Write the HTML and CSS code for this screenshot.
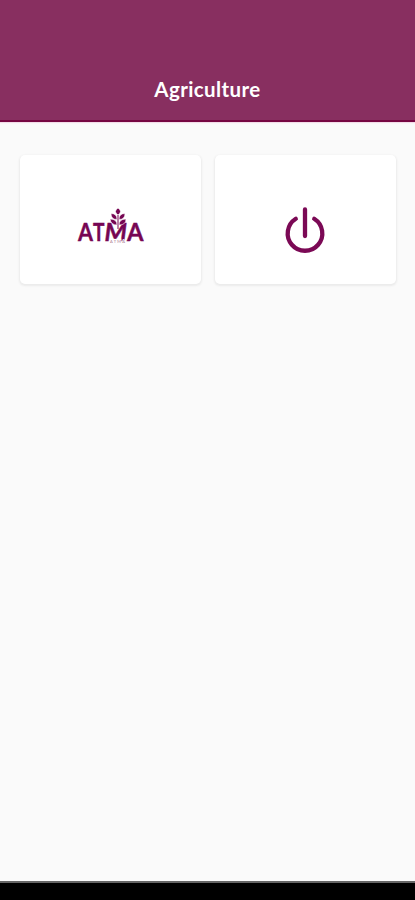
FILE: index.html
```html
<!DOCTYPE html>
<html lang="en">
<head>
<meta charset="utf-8">
<meta name="viewport" content="width=device-width, initial-scale=1">
<title>Agriculture</title>
<link rel="stylesheet" href="styles.css">
</head>
<body>
<header class="app-bar"><h1 class="title">Agriculture</h1></header>
<main class="tiles">
  <a class="tile">
    <svg class="logo" width="70" height="36" viewBox="0 0 70 36">
      <g class="logo-text">
        <text x="2" y="32.8" textLength="15" lengthAdjust="spacingAndGlyphs">A</text>
        <text x="17" y="32.8" textLength="11.5" lengthAdjust="spacingAndGlyphs">T</text>
        <text x="28.5" y="32.8" textLength="22.5" lengthAdjust="spacingAndGlyphs" class="slant">M</text>
        <text x="51" y="32.8" textLength="16.5" lengthAdjust="spacingAndGlyphs">A</text>
      </g>
      <g class="leaf">
        <path d="M42 0q5 3.500 0 7q-5-3.500 0-7zM41 11.500q-6 0-6-6q6 0 6 6zM43 11.500q0-6 6-6q0 6-6 6zM41 17q-6 0-7-6q7 0 7 6zM43 17q0-6 7-6q0 6-7 6z"/>
        <path class="stem" d="M42 7v14"/>
      </g>
      <text class="caption" x="34" y="35" textLength="15">ATMA</text>
    </svg>
  </a>
  <a class="tile">
    <svg class="power" width="44" height="50" viewBox="0 0 44 50">
      <path d="M12.8 13.8A17.3 17.3 0 1 0 31.2 13.8M22 4.5V31"/>
    </svg>
  </a>
</main>
<footer class="nav-bar"></footer>
</body>
</html>
```
FILE: styles.css
```css
* { box-sizing: border-box; }
body {
  margin: 0;
  height: 900px;
  display: flex;
  flex-direction: column;
  background: #fafafa;
  font-family: Lato, sans-serif;
  overflow: hidden;
}
.app-bar {
  height: 122px;
  padding-top: 77px;
  background: #882f60;
  border-bottom: 2px solid #760642;
  box-shadow: 0 1px 1px #f2dce8;
  text-align: center;
}
.title {
  margin: 0;
  color: #fff;
  font-size: 20.5px;
  line-height: 25px;
  font-weight: 700;
  letter-spacing: .4px;
}
.tiles {
  flex: 1;
  display: grid;
  grid-template-columns: 1fr 1fr;
  grid-auto-rows: 129px;
  gap: 14px;
  padding: 33px 19px 0 20px;
}
.tile {
  display: flex;
  justify-content: center;
  background: #fff;
  border-radius: 5px;
  box-shadow: 0 1px 2px 1px #ebebeb;
}
.logo { margin-top: 53px; overflow: visible; }
.logo-text {
  fill: #760653;
  stroke: #760653;
  stroke-width: .4;
  font-size: 24px;
  font-weight: 700;
}
.slant { font-style: italic; }
.leaf { fill: #760653; stroke: #fff; stroke-width: .6; }
.stem { stroke: #760653; stroke-width: 1; }
.caption {
  fill: #a87590;
  stroke: #fff;
  stroke-width: 1.5px;
  paint-order: stroke;
  font-size: 4px;
}
.power {
  margin: 49.5px 2px 0 0;
  fill: none;
  stroke: #7b0955;
  stroke-width: 4.3;
  stroke-linecap: round;
}
.nav-bar {
  height: 19px;
  background: #000;
  border-top: 2px solid #666;
}
```
